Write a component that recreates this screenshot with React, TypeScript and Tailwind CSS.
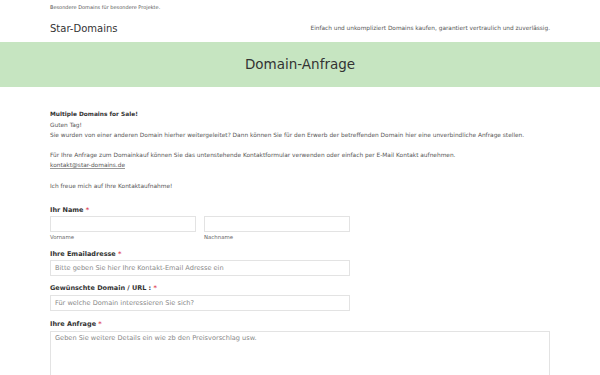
const font = { fontFamily: '"DejaVu Sans", Verdana, sans-serif' };

function Label({ children }: { children: React.ReactNode }) {
  return (
    <div className="text-[6.5px] font-bold leading-[8px] text-[#333]">
      {children} <span className="text-[#e04c5c]">*</span>
    </div>
  );
}

function Field({ placeholder, className = "" }: { placeholder?: string; className?: string }) {
  return (
    <div
      className={`flex h-[16px] items-center border border-[#e3e3e3] bg-white px-[4px] text-[6.6px] text-[#888] ${className}`}
    >
      {placeholder}
    </div>
  );
}

export default function App() {
  return (
    <div className="h-[375px] w-[600px] overflow-hidden bg-white text-[#444]" style={font}>
      <header className="mx-[50px]">
        <p className="pt-[4px] text-[5px] leading-[6px] text-[#555]">Besondere Domains für besondere Projekte.</p>
        <div className="flex h-[32px] items-center justify-between pt-[5px]">
          <span className="text-[10px] text-[#333]">Star-Domains</span>
          <span className="text-[5.8px] text-[#555]">
            Einfach und unkompliziert Domains kaufen, garantiert vertraulich und zuverlässig.
          </span>
        </div>
      </header>

      <div className="flex h-[45px] items-center justify-center bg-[#c6e5c1]">
        <h1 className="text-[13.5px] text-[#333]">Domain-Anfrage</h1>
      </div>

      <main className="mx-[50px] pt-[22px] text-[5.85px] leading-[10.5px] text-[#555]">
        <p className="font-bold text-[#333]">Multiple Domains for Sale!</p>
        <p>Guten Tag!</p>
        <p>
          Sie wurden von einer anderen Domain hierher weitergeleitet? Dann können Sie für den Erwerb der betreffenden
          Domain hier eine unverbindliche Anfrage stellen.
        </p>
        <p className="mt-[9px]">
          Für Ihre Anfrage zum Domainkauf können Sie das untenstehende Kontaktformular verwenden oder einfach per E-Mail
          Kontakt aufnehmen.
        </p>
        <a className="underline decoration-[#999]">kontakt@star-domains.de</a>
        <p className="mt-[10px]">Ich freue mich auf Ihre Kontaktaufnahme!</p>

        <form className="mt-[15px] flex flex-col">
          <Label>Ihr Name</Label>
          <div className="mt-[2px] flex w-[300px] gap-[8px]">
            <div className="flex-1">
              <Field />
              <div className="mt-[2px] text-[5.4px] leading-[6px] text-[#666]">Vorname</div>
            </div>
            <div className="flex-1">
              <Field />
              <div className="mt-[2px] text-[5.4px] leading-[6px] text-[#666]">Nachname</div>
            </div>
          </div>

          <div className="mt-[10px]">
            <Label>Ihre Emailadresse</Label>
          </div>
          <Field className="mt-[2px] w-[300px]" placeholder="Bitte geben Sie hier Ihre Kontakt-Email Adresse ein" />

          <div className="mt-[8px]">
            <Label>Gewünschte Domain / URL :</Label>
          </div>
          <Field className="mt-[3px] w-[300px]" placeholder="Für welche Domain interessieren Sie sich?" />

          <div className="mt-[9px]">
            <Label>Ihre Anfrage</Label>
          </div>
          <div className="mt-[3px] h-[80px] w-[500px] border border-[#e3e3e3] px-[4px] pt-[2px] text-[6.6px] leading-[9px] text-[#888]">
            Geben Sie weitere Details ein wie zb den Preisvorschlag usw.
          </div>
        </form>
      </main>
    </div>
  );
}
